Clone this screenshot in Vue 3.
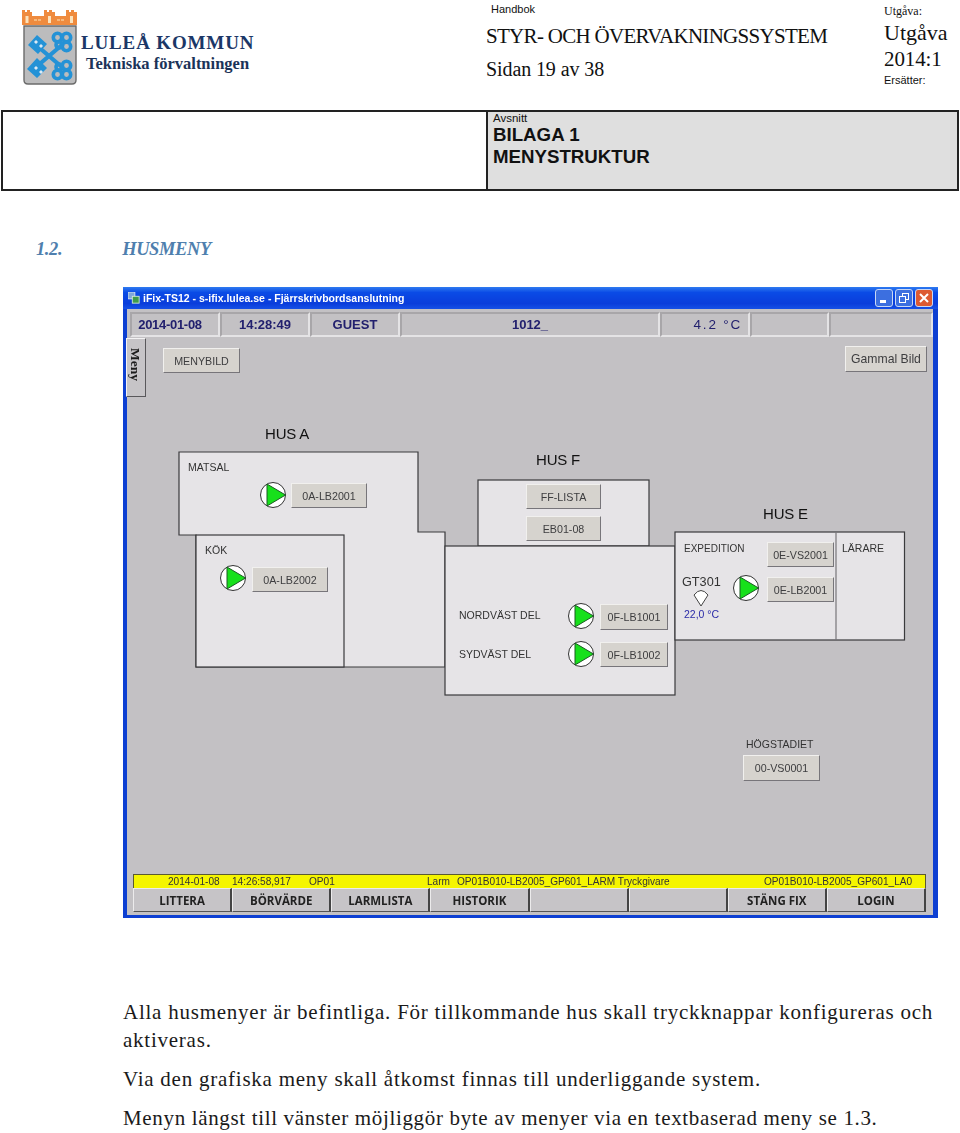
<script setup>
const at = (x, y) => ({ left: x - 127 + 'px', top: y - 337 + 'px' })
const box = (x, y, w, h) => ({ ...at(x, y), width: w + 'px', height: h + 'px' })

const buttons = [
  { t: 'MENYBILD', x: 163, y: 348, w: 77, h: 25 },
  { t: 'Gammal Bild', x: 845, y: 346, w: 82, h: 26, big: true },
  { t: '0A-LB2001', x: 291, y: 483, w: 76, h: 25 },
  { t: '0A-LB2002', x: 252, y: 567, w: 76, h: 25 },
  { t: 'FF-LISTA', x: 526, y: 484, w: 75, h: 25 },
  { t: 'EB01-08', x: 526, y: 516, w: 75, h: 25 },
  { t: '0E-VS2001', x: 767, y: 542, w: 67, h: 25 },
  { t: '0E-LB2001', x: 767, y: 577, w: 67, h: 25 },
  { t: '0F-LB1001', x: 600, y: 604, w: 68, h: 26 },
  { t: '0F-LB1002', x: 600, y: 642, w: 68, h: 25 },
  { t: '00-VS0001', x: 743, y: 755, w: 77, h: 26 }
]
const labels = [
  { t: 'MATSAL', x: 188, y: 461 },
  { t: 'KÖK', x: 205, y: 544 },
  { t: 'NORDVÄST DEL', x: 459, y: 609 },
  { t: 'SYDVÄST DEL', x: 459, y: 648 },
  { t: 'EXPEDITION', x: 684, y: 542, tight: true },
  { t: 'LÄRARE', x: 842, y: 542 },
  { t: 'HÖGSTADIET', x: 746, y: 738 }
]
const heads = [
  { t: 'HUS A', x: 265, y: 425 },
  { t: 'HUS F', x: 536, y: 451 },
  { t: 'HUS E', x: 763, y: 505 }
]
const pumps = [
  { x: 273, y: 495 },
  { x: 233, y: 578 },
  { x: 581, y: 616 },
  { x: 581, y: 654 },
  { x: 746, y: 588 }
]
const cells = [
  { t: '2014-01-08', w: 90, cls: 'date' },
  { t: '14:28:49', w: 90 },
  { t: 'GUEST', w: 90 },
  { t: '1012_', w: 260 },
  { t: '4.2 °C', w: 90, cls: 'wide' },
  { t: '', w: 79 },
  { t: '', w: 104 }
]
const alarm = ['2014-01-08', '14:26:58,917', 'OP01', 'Larm', 'OP01B010-LB2005_GP601_LARM Tryckgivare', 'OP01B010-LB2005_GP601_LA0']
const softkeys = ['LITTERA', 'BÖRVÄRDE', 'LARMLISTA', 'HISTORIK', '', '', 'STÄNG FIX', 'LOGIN']
</script>

<template>
  <div class="page">
    <header class="head">
      <div class="brand">
        <svg class="crest" width="58" height="78" viewBox="0 0 58 78">
          <g fill="#ef8b3e">
            <path d="M1 2h3v2h2V2h3v2h2v13H1zM23 2h3v2h2V2h3v2h3v13H23zM45 2h3v2h2V2h3v2h3v13H45z" />
            <rect x="11" y="8" width="12" height="9" />
            <rect x="34" y="8" width="11" height="9" />
          </g>
          <path d="M6 8v7M28.500 8v7M50.500 8v7" stroke="#fbe3bd" stroke-width="3" />
          <path d="M13 12h8M36 12h7" stroke="#f8c992" stroke-width="1.500" stroke-dasharray="3 1" />
          <path d="M3 18h52v54q0 4-4 4H7q-4 0-4-4z" fill="#bcbcbd" stroke="#6b6b6b" stroke-width="1.400" />
          <g stroke="#2492d6" fill="none">
            <path d="M14 36L42 60M14 60L42 36" stroke-width="4.200" />
            <g stroke-width="3.600">
              <circle cx="36.500" cy="29.500" r="4.200" /><circle cx="45.500" cy="29.500" r="4.200" /><circle cx="45.500" cy="38.500" r="4.200" /><circle cx="38" cy="37" r="3" />
              <circle cx="38" cy="59" r="3" /><circle cx="45.500" cy="57.500" r="4.200" /><circle cx="45.500" cy="66.500" r="4.200" /><circle cx="36.500" cy="66.500" r="4.200" />
            </g>
          </g>
          <path d="M16 27l10 9-9 10-10-9zM16 50l10 10-10 10-10-9z" fill="#2492d6" />
          <path d="M13 34l2-2 2 2-2 2zM18 38l2-2 2 2-2 2zM13 60l2-2 2 2-2 2zM18 64l2-2 2 2-2 2z" fill="#dbeaf5" />
        </svg>
        <div class="brandtext">
          <div class="kommun">LULEÅ KOMMUN</div>
          <div class="forv">Tekniska förvaltningen</div>
        </div>
      </div>
      <div class="doc">
        <div class="small-sans">Handbok</div>
        <div class="title">STYR- OCH ÖVERVAKNINGSSYSTEM</div>
        <div class="sida">Sidan 19 av 38</div>
      </div>
      <div class="issue">
        <div class="issue-label">Utgåva:</div>
        <div class="issue-big first">Utgåva</div>
        <div class="issue-big second">2014:1</div>
        <div class="replaces">Ersätter:</div>
      </div>
    </header>

    <section class="frame">
      <div class="frame-left"></div>
      <div class="frame-right">
        <div class="avsnitt">Avsnitt</div>
        <div class="section-name">BILAGA 1<br />MENYSTRUKTUR</div>
      </div>
    </section>

    <h2 class="heading"><em>1.2.</em><em>HUSMENY</em></h2>

    <div class="window">
      <div class="titlebar">
        <svg width="12" height="12" viewBox="0 0 14 14" class="appicon">
          <rect x="0" y="0" width="8" height="8" fill="#7fa7d9" stroke="#dfe9f5" />
          <rect x="5" y="5" width="8" height="8" fill="#3f9c4b" stroke="#d8efd8" />
        </svg>
        <span class="wintitle">iFix-TS12 - s-ifix.lulea.se - Fjärrskrivbordsanslutning</span>
        <div class="controls">
          <span class="ctl"><svg width="16" height="16" viewBox="0 0 16 16"><rect x="4" y="10" width="6" height="3" fill="#fff" /></svg></span>
          <span class="ctl"><svg width="16" height="16" viewBox="0 0 16 16" fill="none" stroke="#fff"><rect x="6.500" y="3.500" width="6" height="6" /><rect x="3.500" y="6.500" width="6" height="6" fill="#3c6fe0" /></svg></span>
          <span class="ctl close"><svg width="16" height="16" viewBox="0 0 16 16" stroke="#fff" stroke-width="2"><path d="M4 4l8 8M12 4l-8 8" /></svg></span>
        </div>
      </div>
      <div class="client">
        <div class="status">
          <div v-for="(c, i) in cells" :key="i" class="cell" :class="c.cls" :style="{ width: c.w + 'px' }">{{ c.t }}</div>
        </div>
        <div class="canvas">
          <svg class="plan" width="806" height="537" viewBox="127 337 806 537">
            <g fill="#e6e4e7" stroke="#3a3a3c" stroke-width="1.200">
              <path d="M179 452H418V532H445V667H196V535H179Z" />
              <rect x="196" y="535" width="148" height="132" />
              <rect x="478" y="480" width="171" height="66" />
              <rect x="445" y="546" width="230" height="149" />
              <rect x="675" y="532" width="229.500" height="108" />
              <path d="M836 532V640" fill="none" stroke="#77767a" />
            </g>
            <g v-for="(p, i) in pumps" :key="i" :transform="`translate(${p.x} ${p.y})`">
              <circle r="12.500" fill="#fff" stroke="#333" />
              <path d="M-6 -11V11L12.500 0Z" fill="#17e01b" stroke="#1d5a24" />
            </g>
            <path d="M694 595Q701 586 708 595L701 606Z" fill="#fff" stroke="#444" />
          </svg>
          <div class="tab">Meny</div>
          <span v-for="h in heads" :key="h.t" class="hus" :style="at(h.x, h.y)">{{ h.t }}</span>
          <span v-for="l in labels" :key="l.t" class="lbl" :class="{ tight: l.tight }" :style="at(l.x, l.y)">{{ l.t }}</span>
          <span class="gt" :style="at(682, 574)">GT301</span>
          <span class="temp" :style="at(684, 608)">22,0 °C</span>
          <div v-for="b in buttons" :key="b.t" class="btn" :class="{ big: b.big }" :style="box(b.x, b.y, b.w, b.h)">{{ b.t }}</div>
        </div>
        <div class="alarm">
          <span v-for="a in alarm" :key="a">{{ a }}</span>
        </div>
        <div class="keys">
          <div v-for="(k, i) in softkeys" :key="i" class="key">{{ k }}</div>
        </div>
      </div>
    </div>

    <div class="body">
      <p class="p1">Alla husmenyer är befintliga. För tillkommande hus skall tryckknappar konfigureras och<br />aktiveras.</p>
      <p class="p2">Via den grafiska meny skall åtkomst finnas till underliggande system.</p>
      <p class="p3">Menyn längst till vänster möjliggör byte av menyer via en textbaserad meny se 1.3.</p>
    </div>
  </div>
</template>

<style scoped>
.page { width: 960px; height: 1133px; overflow: hidden; background: #fff; font-family: "Liberation Serif", serif; color: #111; position: relative; }
.head { display: flex; height: 110px; }
.brand { width: 486px; display: flex; padding: 8px 0 0 21px; box-sizing: border-box; }
.crest { flex: none; }
.brandtext { margin-left: 2px; padding-top: 24px; }
.kommun { font-size: 19px; font-weight: bold; letter-spacing: .85px; color: #1b3767; line-height: 22px; white-space: nowrap; }
.forv { font-size: 16.500px; font-weight: bold; color: #1b3358; line-height: 18px; margin-top: 1px; margin-left: 5px; white-space: nowrap; }
.doc { width: 398px; padding-top: 2px; }
.small-sans { font: 11px/14px "Liberation Sans", sans-serif; padding-left: 5px; }
.title { font-size: 21px; line-height: 24px; margin-top: 8px; letter-spacing: -.7px; white-space: nowrap; }
.sida { font-size: 20px; line-height: 24px; margin-top: 9px; letter-spacing: -.1px; }
.issue { padding-top: 4px; }
.issue-label { font-size: 12px; line-height: 15px; }
.issue-big { font-size: 22px; line-height: 26px; }
.issue-big.second { font-size: 21px; letter-spacing: -.1px; }
.issue-big.first { margin-top: 1px; }
.replaces { font: 11px/13px "Liberation Sans", sans-serif; margin-top: 2px; }
.frame { display: flex; margin-left: 1px; width: 958px; height: 81px; border: 2px solid #222; box-sizing: border-box; }
.frame-left { width: 483px; border-right: 2px solid #222; }
.frame-right { flex: 1; background: #dfdfdf; padding-left: 5px; font-family: "Liberation Sans", sans-serif; }
.avsnitt { font-size: 11.500px; line-height: 13px; }
.section-name { font-size: 18.700px; font-weight: bold; line-height: 22px; margin-top: -1px; }
.heading { margin: 47px 0 0 36px; font-size: 18.500px; line-height: 22px; font-weight: bold; color: #4f7fae; display: flex; gap: 60px; letter-spacing: -.4px; }
.heading em { font-style: italic; }
.window { margin: 27px 0 0 123px; width: 815px; height: 631px; box-sizing: border-box; background: #0d3fd2; padding: 0 5px 3px 4px; display: flex; flex-direction: column; filter: blur(.3px); }
.titlebar { height: 22px; flex: none; display: flex; align-items: center; background: linear-gradient(#2f7bf0, #0a4be6 25%, #0a3ddb 75%, #1650e6); margin: 0 -5px 0 -4px; padding: 0 5px; }
.appicon { margin-left: 0; }
.wintitle { color: #fff; font: bold 10.500px "Liberation Sans", sans-serif; margin-left: 3px; letter-spacing: 0; white-space: nowrap; }
.controls { margin-left: auto; display: flex; gap: 2px; }
.ctl { width: 16px; height: 16px; background: #3c6fe0; border: 1px solid #c9d8f5; border-radius: 3px; display: flex; }
.ctl.close { background: #dd5a32; }
.client { flex: 1; min-height: 0; background: #c3c1c4; display: flex; flex-direction: column; }
.status { flex: none; height: 28px; padding: 3px 0 0 3px; box-sizing: border-box; display: flex; }
.cell { height: 25px; box-sizing: border-box; border: 2px solid; border-color: #a8a6a9 #e4e3e5 #e4e3e5 #a8a6a9; display: flex; align-items: center; justify-content: center; font: bold 13px "Liberation Sans", sans-serif; color: #22206e; }
.cell.date { padding-right: 10px; letter-spacing: -.3px; }
.cell.wide { justify-content: flex-end; padding-right: 6px; font-weight: normal; font-size: 13.500px; letter-spacing: 1.800px; }
.canvas { position: relative; flex: none; height: 537px; }
.plan { position: absolute; left: 0; top: 0; }
.tab { position: absolute; left: -1px; top: 1px; width: 20px; height: 59px; box-sizing: border-box; background: #c6c4c7; border: 1px solid; border-color: #f3f2f3 #59585b #59585b #f3f2f3; writing-mode: vertical-rl; font: bold 13.500px "Liberation Serif", serif; padding: 9px 2px 0 0; display: flex; align-items: center; color: #1c1c1c; }
.btn { position: absolute; box-sizing: border-box; display: flex; align-items: center; justify-content: center; background: #d6d3ce; border: 1px solid; border-color: #f1f0ee #77757a #77757a #f1f0ee; font: 10.700px "Liberation Sans", sans-serif; color: #3d3d3f; white-space: nowrap; }
.btn.big { font-size: 12.200px; }
.hus { position: absolute; font: 15px/18px "Liberation Sans", sans-serif; color: #111; letter-spacing: -.2px; white-space: nowrap; }
.lbl { position: absolute; font: 10.500px/13px "Liberation Sans", sans-serif; color: #333; white-space: nowrap; }
.lbl.tight { font-size: 10px; }
.gt { position: absolute; font: 12.700px/16px "Liberation Sans", sans-serif; color: #333; }
.temp { position: absolute; font: 10.500px/13px "Liberation Sans", sans-serif; color: #2b2ba8; }
.alarm { flex: none; margin-left: 6px; width: 793px; height: 14px; box-sizing: border-box; background: #f5f500; border: 1px solid #5a5a30; border-bottom: 0; padding-left: 34px; display: grid; grid-template-columns: 64px 77px 118px 30px 307px auto; align-items: center; font: 10.100px "Liberation Sans", sans-serif; color: #333; white-space: nowrap; }
.keys { flex: none; margin-left: 6px; width: 793px; display: grid; grid-template-columns: repeat(8, 1fr); }
.key { height: 24px; box-sizing: border-box; background: #c6c4c7; border: solid; border-color: #ecebec #444 #555 #ecebec; border-width: 1px 2px 1px 1px; display: flex; align-items: center; justify-content: center; font: bold 11.500px "Open Sans", sans-serif; color: #222; }
.body { margin-left: 123px; padding-top: 80px; font-size: 21px; letter-spacing: .76px; color: #1a1a1a; white-space: nowrap; }
.body p { margin: 0; }
.p1 { line-height: 28px; }
.p2 { margin-top: 11px !important; line-height: 28px; }
.p3 { margin-top: 11px !important; line-height: 28px; letter-spacing: .66px; }
</style>

<style>
html, body { margin: 0; background: #fff; }
</style>
